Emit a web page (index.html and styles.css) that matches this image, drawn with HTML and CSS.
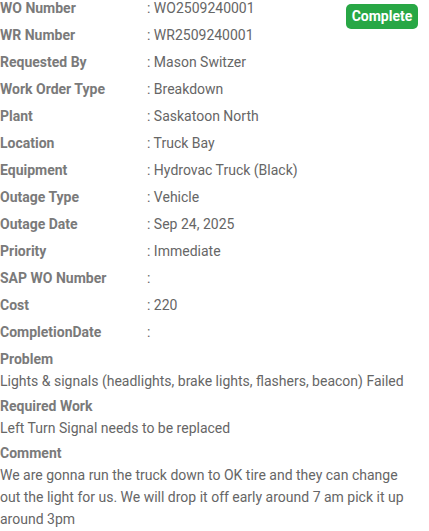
FILE: index.html
```html
<!DOCTYPE html>
<html>
<head>
<meta charset="utf-8">
<link rel="stylesheet" href="styles.css">
</head>
<body>
<div class="card">
  <span class="badge">Complete</span>
  <div class="row"><span class="label">WO Number</span><span class="value">: WO2509240001</span></div>
  <div class="row"><span class="label">WR Number</span><span class="value">: WR2509240001</span></div>
  <div class="row"><span class="label">Requested By</span><span class="value">: Mason Switzer</span></div>
  <div class="row"><span class="label">Work Order Type</span><span class="value">: Breakdown</span></div>
  <div class="row"><span class="label">Plant</span><span class="value">: Saskatoon North</span></div>
  <div class="row"><span class="label">Location</span><span class="value">: Truck Bay</span></div>
  <div class="row"><span class="label">Equipment</span><span class="value">: Hydrovac Truck (Black)</span></div>
  <div class="row"><span class="label">Outage Type</span><span class="value">: Vehicle</span></div>
  <div class="row"><span class="label">Outage Date</span><span class="value">: Sep 24, 2025</span></div>
  <div class="row"><span class="label">Priority</span><span class="value">: Immediate</span></div>
  <div class="row"><span class="label">SAP WO Number</span><span class="value">:</span></div>
  <div class="row"><span class="label">Cost</span><span class="value">: 220</span></div>
  <div class="row"><span class="label">CompletionDate</span><span class="value">:</span></div>
  <div class="block">
    <div class="label">Problem</div>
    <div class="text">Lights &amp; signals (headlights, brake lights, flashers, beacon) Failed</div>
  </div>
  <div class="block">
    <div class="label">Required Work</div>
    <div class="text">Left Turn Signal needs to be replaced</div>
  </div>
  <div class="block">
    <div class="label">Comment</div>
    <div class="text">We are gonna run the truck down to OK tire and they can change out the light for us. We will drop it off early around 7 am pick it up around 3pm</div>
  </div>
</div>
</body>
</html>
```

FILE: styles.css
```css
html, body {
  margin: 0;
  padding: 0;
  background: #ffffff;
}
body {
  font-family: Roboto, "Liberation Sans", sans-serif;
  font-size: 14px;
  color: #666666;
}
.card {
  position: relative;
  width: 410px;
}
.badge {
  position: absolute;
  top: 4px;
  left: 346px;
  width: 72px;
  height: 25px;
  line-height: 25px;
  text-align: center;
  background: #28a745;
  color: #ffffff;
  font-weight: 700;
  font-size: 14px;
  border-radius: 5px;
}
.row {
  display: flex;
  line-height: 16px;
  margin-bottom: 11px;
}
.label {
  font-weight: 700;
  color: #7a7a7a;
}
.row .label {
  width: 147px;
  flex: none;
}
.value {
  color: #666666;
}
.block {
  margin-bottom: 6px;
}
.block .label {
  line-height: 16px;
  margin-bottom: 3px;
}
.text {
  line-height: 22px;
}
```
